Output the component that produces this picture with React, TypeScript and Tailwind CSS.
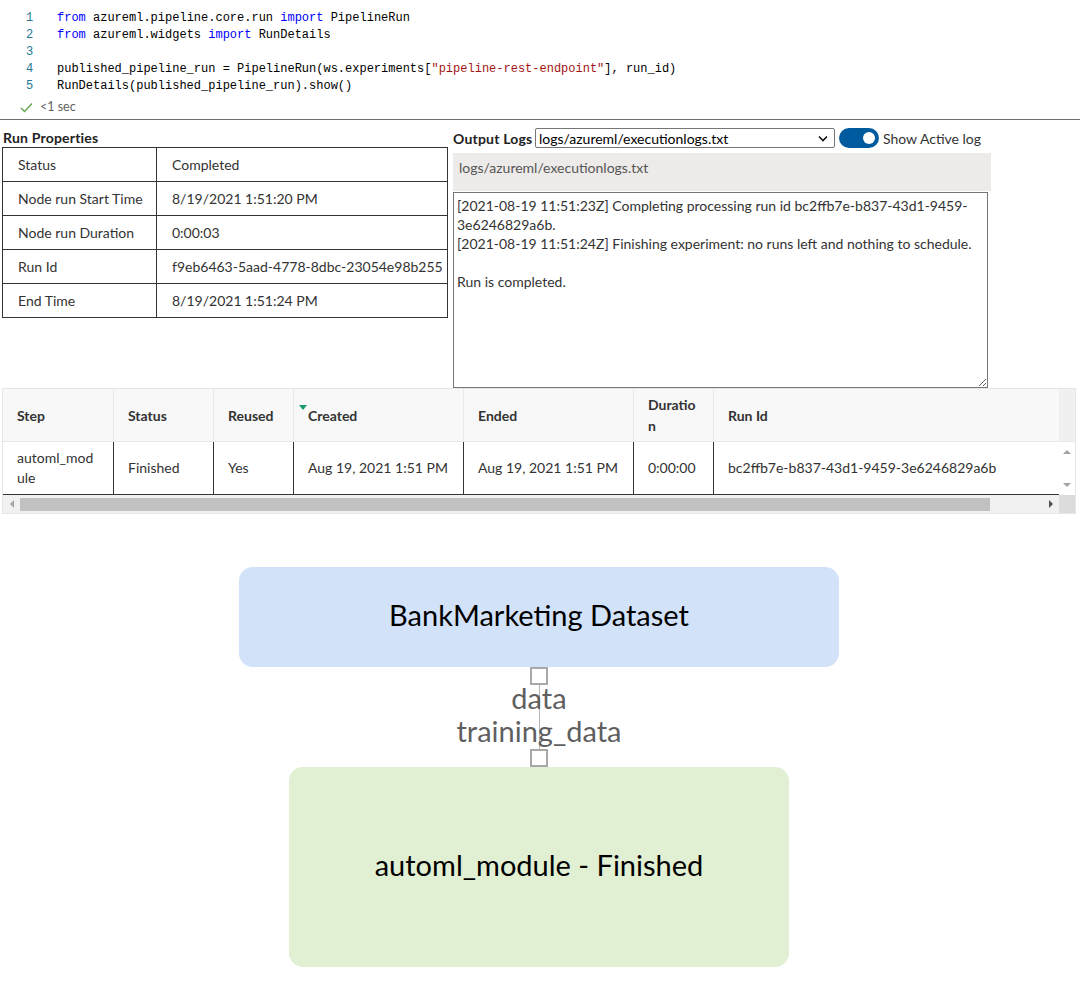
import React from 'react';

const mono = "font-['Liberation_Mono',monospace]";

const CodeLine = ({ n, children }: { n: number; children?: React.ReactNode }) => (
  <div className="flex h-[17px] leading-[17px]">
    <div className="w-[57px] pl-[26px] text-[#237893]">{n}</div>
    <div className="whitespace-pre text-black">{children}</div>
  </div>
);

const Kw = ({ children }: { children: React.ReactNode }) => <span className="text-[#0000ff]">{children}</span>;

const props = [
  ['Status', 'Completed'],
  ['Node run Start Time', '8/19/2021 1:51:20 PM'],
  ['Node run Duration', '0:00:03'],
  ['Run Id', 'f9eb6463-5aad-4778-8dbc-23054e98b255'],
  ['End Time', '8/19/2021 1:51:24 PM'],
];

const cols = [
  { key: 'Step', w: 'w-[111px]', val: 'automl_module' },
  { key: 'Status', w: 'w-[100px]', val: 'Finished' },
  { key: 'Reused', w: 'w-[80px]', val: 'Yes' },
  { key: 'Created', w: 'w-[170px]', val: 'Aug 19, 2021 1:51 PM' },
  { key: 'Ended', w: 'w-[170px]', val: 'Aug 19, 2021 1:51 PM' },
  { key: 'Duration', w: 'w-[80px]', val: '0:00:00' },
  { key: 'Run Id', w: 'w-[345px]', val: 'bc2ffb7e-b837-43d1-9459-3e6246829a6b' },
];

const logText =
  '[2021-08-19 11:51:23Z] Completing processing run id bc2ffb7e-b837-43d1-9459-3e6246829a6b.\n[2021-08-19 11:51:24Z] Finishing experiment: no runs left and nothing to schedule.\n\nRun is completed.';

export default function App() {
  return (
    <div className="w-[1080px] h-[983px] overflow-hidden bg-white font-['Lato',sans-serif] text-[#333]">
      {/* code cell */}
      <div className={`${mono} text-[12px] pt-[10px]`}>
        <CodeLine n={1}>
          <Kw>from</Kw> azureml.pipeline.core.run <Kw>import</Kw> PipelineRun
        </CodeLine>
        <CodeLine n={2}>
          <Kw>from</Kw> azureml.widgets <Kw>import</Kw> RunDetails
        </CodeLine>
        <CodeLine n={3} />
        <CodeLine n={4}>
          published_pipeline_run = PipelineRun(ws.experiments[<span className="text-[#a31515]">"pipeline-rest-endpoint"</span>], run_id)
        </CodeLine>
        <CodeLine n={5}>RunDetails(published_pipeline_run).show()</CodeLine>
      </div>
      <div className="flex items-center h-[24px] pl-[20px] gap-[7px] text-[12.5px] text-[#616161]">
        <svg width="13" height="11" viewBox="0 0 13 11" fill="none">
          <path d="M1 6 L4.5 9.5 L12 1.5" stroke="#5ea54c" strokeWidth="1.3" />
        </svg>
        <span>&lt;1 sec</span>
      </div>
      <div className="h-px bg-[#6e6e6e]" />

      {/* widget */}
      <div className="flex pl-[2px] pt-[8px] h-[268px]">
        <div className="w-[446px]">
          <div className="h-[19px] leading-[19px] text-[14px] font-bold text-[#222] pl-[1px] tracking-[0.2px]">Run Properties</div>
          <table className="w-[446px] table-fixed border-collapse text-[14px]">
            <tbody>
              {props.map(([k, v]) => (
                <tr key={k} className="h-[34px]">
                  <td className="w-[154px] border border-[#333] px-[15px] whitespace-nowrap">{k}</td>
                  <td className="border border-[#333] px-[15px] whitespace-nowrap">{v}</td>
                </tr>
              ))}
            </tbody>
          </table>
        </div>
        <div className="ml-[5px] w-[538px]">
          <div className="flex items-center h-[20px]">
            <span className="w-[82px] text-[14px] font-bold text-[#222] tracking-[0.2px]">Output Logs</span>
            <div className="flex items-center justify-between w-[300px] h-[20px] border border-[#767676] rounded-[2px] pl-[3px] pr-[6px] text-[14px] text-black">
              <span>logs/azureml/executionlogs.txt</span>
              <svg width="10" height="7" viewBox="0 0 10 7" fill="none">
                <path d="M1 1.5 L5 5.5 L9 1.5" stroke="#111" strokeWidth="1.6" />
              </svg>
            </div>
            <div className="ml-[4px] flex items-center justify-end w-[40px] h-[20px] rounded-full bg-[#005a9e] pr-[4px]">
              <div className="w-[12px] h-[12px] rounded-full bg-white" />
            </div>
            <span className="ml-[4px] text-[14px] text-[#333]">Show Active log</span>
          </div>
          <div className="mt-[5px] h-[38px] bg-[#edebe9] pl-[6px] pt-[5px] text-[14px] leading-[19px] text-[#555]">
            logs/azureml/executionlogs.txt
          </div>
          <textarea
            readOnly
            defaultValue={logText}
            className="block mt-[1px] w-[535px] h-[196px] border border-[#767676] px-[3px] pt-[3px] text-[14px] leading-[19px] text-[#333] resize-y outline-none"
          />
        </div>
      </div>

      {/* steps table */}
      <div className="ml-[2px] w-[1074px] border border-[#e6e6e6] text-[14px]">
        <div className="flex h-[53px] bg-[#f8f8f8] border-b border-[#e8e8e8] font-bold text-[#333]">
          {cols.map((c) => (
            <div
              key={c.key}
              className={`${c.w} relative flex items-center pl-[14px] pr-[14px] leading-[21px] break-all ${c.key === 'Run Id' ? '' : 'border-r border-[#e8e8e8]'}`}
            >
              {c.key === 'Created' && (
                <div className="absolute left-[5px] top-[16px] w-0 h-0 border-l-[4.5px] border-r-[4.5px] border-t-[5px] border-l-transparent border-r-transparent border-t-[#1a9b6c]" />
              )}
              {c.key}
            </div>
          ))}
          <div className="w-[16px] bg-[#f0f0f0]" />
        </div>
        <div className="flex h-[53px]">
          <div className="flex border-b border-[#333]">
            {cols.map((c) => (
              <div
                key={c.key}
                className={`${c.w} flex items-center pl-[14px] pr-[14px] leading-[20px] break-all text-[#333] ${c.key === 'Run Id' ? '' : 'border-r border-[#333]'}`}
              >
                {c.val}
              </div>
            ))}
          </div>
          <div className="w-[16px] flex flex-col items-center justify-between py-[8px]">
            <div className="w-0 h-0 border-l-[4px] border-r-[4px] border-b-[4px] border-l-transparent border-r-transparent border-b-[#a3a3a3]" />
            <div className="w-0 h-0 border-l-[4px] border-r-[4px] border-t-[4px] border-l-transparent border-r-transparent border-t-[#a3a3a3]" />
          </div>
        </div>
        <div className="flex h-[18px] bg-[#f1f1f1]">
          <div className="w-[17px] flex items-center justify-center">
            <div className="w-0 h-0 border-t-[4px] border-b-[4px] border-r-[4px] border-t-transparent border-b-transparent border-r-[#a3a3a3]" />
          </div>
          <div className="flex-1 flex items-center">
            <div className="h-[13px] w-[970px] bg-[#c1c1c1]" />
          </div>
          <div className="w-[17px] flex items-center justify-center">
            <div className="w-0 h-0 border-t-[4px] border-b-[4px] border-l-[4px] border-t-transparent border-b-transparent border-l-[#505050]" />
          </div>
          <div className="w-[16px] bg-[#dcdcdc]" />
        </div>
      </div>

      {/* pipeline graph */}
      <div className="flex flex-col items-center pt-[53px] pr-[2px]">
        <div className="w-[600px] h-[100px] rounded-[14px] bg-[#d2e2f8] flex items-center justify-center pb-[4px] text-[29px] text-black">
          BankMarketing Dataset
        </div>
        <div className="relative flex flex-col items-center h-[100px]">
          <div className="absolute left-1/2 top-[18px] bottom-[18px] w-px bg-[#b5b5b5]" />
          <div className="relative shrink-0 w-[18px] h-[18px] border-2 border-[#a8a8a8] bg-white" />
          <div className="relative flex-1 min-h-0 flex flex-col items-center justify-center pb-[6px] text-[29px] leading-[33px] text-[#5f5f5f]">
            <span>data</span>
            <span>training_data</span>
          </div>
          <div className="relative shrink-0 w-[18px] h-[18px] border-2 border-[#a8a8a8] bg-white" />
        </div>
        <div className="w-[500px] h-[200px] rounded-[14px] bg-[#e1efd2] flex items-center justify-center pb-[4px] text-[29px] text-black">
          automl_module - Finished
        </div>
      </div>
    </div>
  );
}
